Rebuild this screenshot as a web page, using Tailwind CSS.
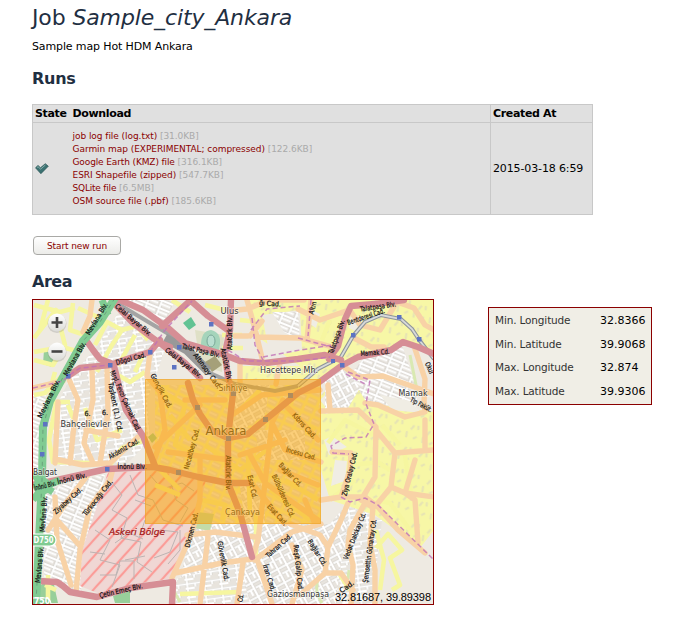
<!DOCTYPE html>
<html lang="en">
<head>
<meta charset="utf-8">
<title>Job Sample_city_Ankara</title>
<script src="https://cdn.jsdelivr.net/npm/@tailwindcss/browser@4"></script>
</head>
<body class="bg-white text-black font-['DejaVu_Sans',sans-serif] text-[11px] leading-[14px] pl-[32px] h-[633px] overflow-hidden">
<h1 class="pt-[4px] h-[40px] text-[22px] leading-[28px] tracking-[-0.13px] text-[#1f2f42] whitespace-nowrap"><span>Job</span> <i>Sample_city_Ankara</i></h1>
<p class="h-[28px] tracking-[-0.13px]">Sample map Hot HDM Ankara</p>
<h2 class="h-[36px] text-[16px] leading-[22px] tracking-[-0.25px] font-bold text-[#1f2f42]">Runs</h2>
<table class="w-[560px] border-collapse bg-[#e0e0e0] border border-[#c8c8c8] table-fixed">
  <colgroup><col class="w-[38px]"><col class="w-[420px]"><col class="w-[102px]"></colgroup>
  <tr class="h-[18px] text-left tracking-[-0.35px]">
    <th class="p-0 pl-[2px]">State</th><th class="p-0 pl-[2px]">Download</th><th class="p-0 pl-[2px] border-l border-[#c8c8c8]">Created At</th>
  </tr>
  <tr class="h-[92px] border-t border-[#c8c8c8]">
    <td class="p-0 pl-[2px]"><svg class="block" width="14" height="12" viewBox="0 0 14 12"><path d="M.5 4.800 3 2.400 5.500 4.700 10.300.700 13.300 3.200 5.900 10.700Z" fill="#3c7272" stroke="#2a5555" stroke-width=".7"/><path d="M2 4.600 3 3.700 5.600 6.100 10.400 2" fill="none" stroke="#86adab" stroke-width="1"/></svg></td>
    <td class="p-0 pl-[2px] text-[9px] leading-[13px] tracking-[-0.05px] text-[#8b0000]">
      <ul class="text-[#aaa]">
        <li><a class="text-[#8b0000]">job log file (log.txt)</a> [31.0KB]</li>
        <li><a class="text-[#8b0000]">Garmin map (EXPERIMENTAL; compressed)</a> [122.6KB]</li>
        <li><a class="text-[#8b0000] tracking-[-0.12px]">Google Earth (KMZ) file</a> [316.1KB]</li>
        <li><a class="text-[#8b0000]">ESRI Shapefile (zipped)</a> [547.7KB]</li>
        <li><a class="text-[#8b0000] tracking-[-0.2px]">SQLite file</a> [6.5MB]</li>
        <li><a class="text-[#8b0000]">OSM source file (.pbf)</a> [185.6KB]</li>
      </ul>
    </td>
    <td class="p-0 pl-[2px] border-l border-[#c8c8c8] tracking-[-0.13px]">2015-03-18 6:59</td>
  </tr>
</table>
<button class="block mt-[21px] ml-[1px] w-[88px] h-[19px] rounded-[4px] border border-[#a9a9a6] bg-linear-to-b from-white to-[#ecece9] text-[9px] leading-[18px] tracking-[-0.1px] text-[#8b0000]">Start new run</button>
<h2 class="mt-[16px] h-[28px] text-[16px] leading-[22px] tracking-[-0.5px] font-bold text-[#1f2f42]">Area</h2>
<div class="flex items-start">
<div class="w-[402px] h-[306px] border border-[#8b0000] shrink-0">
<svg class="block" width="400" height="304" viewBox="33 300 400 304">
<defs>
<pattern id="ga" width="17" height="9" patternUnits="userSpaceOnUse" patternTransform="rotate(-8)"><rect width="17" height="9" fill="#e8e4dd"/><path d="M0 1.5H17M2 0V9M10 1V5" stroke="#c9c6c0" stroke-width="2.6"/><path d="M0 1.5H17M2 0V9M0 6H9M10 1V5" stroke="#fff" stroke-width="1.8"/></pattern>
<pattern id="gb" width="13" height="8" patternUnits="userSpaceOnUse" patternTransform="rotate(22)"><rect width="13" height="8" fill="#e6e2dc"/><path d="M0 2H13M3 0V8" stroke="#c6c4c0" stroke-width="2.6"/><path d="M0 2H13M3 0V8M3 5.5H13" stroke="#fff" stroke-width="1.8"/></pattern>
<pattern id="gc" width="15" height="10" patternUnits="userSpaceOnUse" patternTransform="rotate(62)"><rect width="15" height="10" fill="#e8e4de"/><path d="M0 2H15M3 0V10M9 2V10" stroke="#c9c7c2" stroke-width="2.6"/><path d="M0 2H15M3 0V10M9 2V10M9 6H15" stroke="#fff" stroke-width="1.8"/></pattern>
<pattern id="ya" width="23" height="17" patternUnits="userSpaceOnUse" patternTransform="rotate(-70)"><rect width="23" height="17" fill="#f7f7a6"/><path d="M4 4l6-1M13 6l5 2M5 11l3 3M15 13l4-1" stroke="#e6e3b4" stroke-width="2"/></pattern>
<pattern id="yb" width="12" height="9" patternUnits="userSpaceOnUse" patternTransform="rotate(25)"><rect width="12" height="9" fill="#e8e4d8"/><path d="M0 2H12M3 0V9" stroke="#f8f8a8" stroke-width="3"/><path d="M4 6H12" stroke="#fff" stroke-width="1"/></pattern>
<pattern id="mil" width="11" height="11" patternUnits="userSpaceOnUse" patternTransform="rotate(42)"><rect width="11" height="11" fill="#f0d7d4"/><path d="M2 0V11" stroke="#fb9c98" stroke-width="2.2"/></pattern>
<linearGradient id="btn" x2="0" y2="1"><stop stop-color="#fff"/><stop offset="1" stop-color="#dcdcd8"/></linearGradient>
</defs>
<rect x="33" y="300" width="400" height="304" fill="#eeeae2"/>
<!-- land use blocks -->
<path d="M98 345 120 310 165 350 147 400 150 440 125 466H60L50 420 70 378Z" fill="url(#ga)"/>
<path d="M125 300H175L165 322Z" fill="url(#gb)"/>
<path d="M33 395H46L42 420V470H33ZM45 490 105 474 80 595 44 580Z" fill="url(#gb)"/>
<path d="M60 400h28l-8 62H56ZM100 372h12l10 60-22 25Z" fill="url(#ga)"/>
<path d="M155 385H321V524H155Z" fill="url(#yb)"/>
<path d="M230 385h40l-5 30-30 20ZM255 430h50v30h-45ZM240 486l25-3v40h-20Z" fill="url(#gc)"/>
<path d="M192 524H330L350 500 365 505V604H175Z" fill="url(#gc)"/>
<path d="M176 579 240 562 250 604H176Z" fill="url(#ga)"/>
<path d="M350 505 382 520 372 604H335Z" fill="url(#ga)"/>
<path d="M248 300H434V350L400 345 345 362 321 380H240V366H300L262 340Z" fill="url(#ya)"/>
<path d="M321 395 345 372 370 385 365 403 434 412V530L420 548 375 515 330 500 321 470Z" fill="url(#ya)"/>
<path d="M365 357 402 345 418 392 415 412 365 400 350 375Z" fill="url(#gb)"/>
<path d="M324 440l8-4 15 11-18 8ZM380 395l30 6 12 12-30-3ZM335 460l12 1-2 20-14 5ZM320 400l15-15 12 12-20 12ZM351 315l14 2-10 14-6-3ZM312 310l8 4-4 14-6-4Z" fill="#f0ede4"/>
<path d="M325 380l20-12 15 20-12 20-23 6Z" fill="url(#gc)"/>
<path d="M262 315 300 310 302 350 270 357Z" fill="#eeeae2"/>
<path d="M272 312 298 312 300 340 284 332Z" fill="url(#gb)"/>
<path d="M195 330 224 335 222 372 200 365Z" fill="#dfe0c6"/>
<path d="M183 323l8-6 5 8-7 5Z" fill="#62c394"/>
<path d="M201 345q0-14 10-15 10 2 9 14t-9 12-10-11Z" fill="#a5d4bb"/><ellipse cx="211" cy="341" rx="4" ry="6" fill="#b9ded0" stroke="#79a898" stroke-width="1"/>
<path d="M205 362l10-6 7 9-10 7Z" fill="#a5a079"/>
<path d="M108 472 155 471 206 480 200 505 190 533 174 578 135 584 100 594 80 586 82 550 95 512Z" fill="url(#mil)"/>
<g fill="none" stroke="#bdb4b3" stroke-width="1"><path d="M110 480l12 15-10 15 15 8-6 20 20 4-4 20 15 10M130 475l8 20 15 5 10 20 20 6M95 530l15 10-10 20 20 5-8 22M150 475l12 14 20-6 12 8M145 520l-6 18M160 530l18 2-8 20-16 6M125 560l20-4M90 552l15 2M170 480l6 20 12 8-8 14M115 543l14-10 14 6M100 575h16l4-14h14v18M135 500l16 6M180 530v20l-12 14"/></g>
<path d="M44 583l10 2 4 18H34v-14ZM113 596l17-6v13h-15ZM148 437l5-4 4 5-5 5ZM44 350l10 4-2 13-9-3Z" fill="#98cf9a"/>
<path d="M197 512l17 2-4 17-16-3Z" fill="#c3dba8"/>
<g fill="none" stroke="#d9e9b2" stroke-width="3"><path d="M318 580q-4 10 4 23M172 588l8 14M410 355l8 40M349 570l-2 15"/></g>
<!-- local yellow streets -->
<g fill="none" stroke="#f6f6a0" stroke-width="4.6" stroke-linejoin="round">
<path d="M34 305 60 312 75 308M34 338 56 310 65 345 53 365 34 360M73 303 70 330 85 335M48 300 40 330M34 352 62 347 80 352M63 375 45 393 34 395M55 372 50 390M78 308 100 318M95 345 107 322 122 330 137 326 148 340M97 372 112 345 122 330M118 366 135 335M56 404 49 440 53 462 92 463M48 402H70M68 405 76 425M85 408 97 440 122 430M110 465 122 448 145 440M116 374 130 382 145 372M135 372 143 355"/>
<path d="M172 300 190 312M205 305 225 310M242 335H222M243 348H222M240 320 258 322M328 443 345 420 374 435M330 500 355 480M352 465 380 462M404 450 412 500M382 425 400 445M374 460 390 470M375 500 390 503 410 530M376 548 388 534 402 550 390 558 400 585 392 590M376 530 384 560 380 590M322 340 330 320M45 585 56 590M340 575 350 590M180 594 240 592M256 513V560M160 470 180 490M48 575V603"/>
<path d="M160 390 185 405 175 445 200 458M155 485 180 495M205 445 240 470 280 440M248 455 250 515M285 410 315 430M270 490 310 520M285 480 318 500M170 415 190 440M202 500 225 505 222 520M240 410 260 390"/>
</g>
<!-- secondary roads -->
<g fill="none" stroke="#f8d2a6" stroke-width="5.4" stroke-linejoin="round" stroke-linecap="round"><path d="M92 300 90 316 83 332M33 388 63 381M68 377 78 400 74 425 70 463M92 370 93 400 84 443 93 463M107 368 108 413 100 463M150 353 147 376 160 392M58 402 55 463M55 459 83 465 110 463 138 437M90 472 63 507 48 530M113 468 110 480 90 507 80 550 76 592M55 497 57 540 71 585M57 520 80 546M86 430 118 436M247 300 255 329 262 358M228 311 247 309 270 300 304 300M250 336 262 321M240 362V385M235 336 248 336M280 362 276 384M298 309 320 320 349 310M258 337 300 338 332 347M311 300 307 340M343 366 358 377 383 376 434 394M354 338 371 347 384 347M397 302 414 308 425 325 434 330M349 309 360 325 380 330 395 305M415 349 425 379 424 404M200 500 192 533 172 578M187 535 215 532 256 537M208 537 200 604M175 573 222 563 252 559 258 540 265 483 272 423 283 400M255 560 272 547 292 532 321 524M258 562 272 604M243 563 237 604M272 423 285 450 321 462M321 411 358 410 376 427 375 477 361 500 372 507M365 403 378 405 405 417 425 412 424 400M376 430 395 453 434 450M425 420 425 450M395 453 391 487 378 503M415 460 405 493 415 500 418 543M391 487 405 493 434 497M332 452 351 453 350 470 341 497M321 500 341 497 365 497 378 507 398 530 425 553M365 503 350 530 348 545 353 565 351 604M373 507 370 543 375 570V604M290 524 320 535 328 547 325 573 300 595M328 547 341 520 348 503M325 573 341 573 353 590M292 545 302 570 292 604M185 400 225 400M160 392 165 430 152 466M155 447 200 405M168 452 230 460M200 460V500M240 455 285 440M232 415 262 395 320 390M250 455 265 483 318 520M283 403 300 420 318 440M280 470 318 485M251 482 285 524M305 500 315 524M328 385 330 410"/></g>
<!-- railways -->
<path d="M110 299 150 323 172 336 190 350 210 373 235 384 275 391 298 386" fill="none" stroke="#a4a4a4" stroke-width="4"/>
<path d="M165 338 187 350 208 371" fill="none" stroke="#999" stroke-width="9"/>
<path d="M298 386 318 369 341 357 353 336 365 322 381 315 401 319 412 329 420 341 434 359" fill="none" stroke="#8f959b" stroke-width="4"/>
<path d="M298 386 318 369 341 357 353 336 365 322 381 315 401 319 412 329 420 341 434 359" fill="none" stroke="#d8dada" stroke-width="1.8"/>
<!-- trunk roads -->
<g fill="none" stroke="#d68e95" stroke-linejoin="round" stroke-linecap="round">
<path stroke-width="6.4" d="M86 340 93 350 100 359 113 364 130 358 150 352 160 340M68 376 80 368 110 365M114 366 120 390 126 410 143 436 155 466M113 302 133 323 150 336 165 347 185 363 200 378M158 342 170 347M120 300 143 310 168 328 185 343 222 354 240 361 265 363 298 359 325 355 341 360M162 326 192 299M189 299 208 316 229 331M231 299 230 330 225 353 228 378 233 393 228 438 228 483 240 513 252 557M404 300 375 304 351 306 345 319 338 346 329 359M434 354 418 347 403 342 391 350 358 357 341 366 318 383 298 393 265 420 248 434 228 438 211 430 200 414 193 400 188 383M32 485 57 480 107 469 153 467 170 470 198 477 228 483 248 483M38 581 57 582 63 586 70 592 97 597 130 588 173 582 172 604"/>
</g>
<g fill="none" stroke="#80cb92" stroke-linejoin="round"><path stroke-width="8" d="M115 298 100 322 83 341 67 370 50 401 43 427 42 480 40 520 36 604"/><path stroke-width="7" d="M102 300 108 315M33 473 42 485 53 492M33 500 42 488 60 480"/></g>
<circle cx="42" cy="486" r="9" fill="#80cb92"/>
<path d="M115 298 100 322 83 341 67 370 50 401 43 427 42 480 40 520 36 604" fill="none" stroke="#6ba27c" stroke-width="1" stroke-dasharray="4 4"/>
<g fill="none" stroke="#c070b8" stroke-width="1.5" stroke-dasharray="5 3" opacity=".8"><path d="M33 388 63 381 68 376 80 368 110 365M150 352 165 330 192 301M252 318 255 345 263 360M251 330 267 309 300 306M263 357 300 350 333 345M298 338 335 348M348 372 370 380 366 404 374 424 366 437 345 438 331 446 333 453 349 454M311 300 308 336M341 497 350 502 365 498 378 505 434 560M346 374 367 385M228 350 246 361 300 361 330 357"/></g>
<g fill="#5d73c2"><path d="M66 374h4.500v4.500h-4.500zM108 363h4.500v4.500h-4.500zM148 350h4.500v4.500h-4.500zM43 422h4.500v4.500h-4.500zM40 452h4.500v4.500h-4.500zM105 467h4.500v4.500h-4.500zM209 322h4.500v4.500h-4.500zM177 345h4.500v4.500h-4.500zM172 365h4.500v4.500h-4.500zM351 333h4.500v4.500h-4.500zM397 315h4.500v4.500h-4.500zM417 337h4.500v4.500h-4.500zM331 359h4v4h-4zM340 363h4.500v4.500h-4.500zM195 405h5v5h-5zM263 417h5v5h-5zM226 436h5v5h-5zM176 470h5v5h-5zM231 391h5v5h-5zM288 393h5v5h-5z"/></g>
<g fill="#80cb92" stroke="#fff" stroke-width="1.200"><rect x="25" y="534" width="31" height="12" rx="6"/><rect x="25" y="598" width="26" height="12" rx="6"/></g>
<g id="labels" font-family="'DejaVu Sans', sans-serif" fill="#111"></g>
<rect x="145.500" y="379.500" width="175" height="144" fill="#f9a300" fill-opacity=".52" stroke="#efa322" stroke-opacity=".7"/>
<!-- zoom controls -->
<g><circle cx="57" cy="323.500" r="9.500" fill="#777" opacity=".25"/><circle cx="57" cy="322.500" r="9" fill="url(#btn)"/><path d="M51.500 322.500h11M57 317v11" stroke="#444" stroke-width="2.600"/>
<circle cx="57" cy="352.500" r="9.500" fill="#777" opacity=".25"/><circle cx="57" cy="351.500" r="9" fill="url(#btn)"/><path d="M51.500 351.500h11" stroke="#444" stroke-width="2.600"/></g>
<text x="335" y="601" font-family="'Liberation Sans', Arial, sans-serif" font-size="11" textLength="96" fill="#000">32.81687, 39.89398</text>
</svg>
</div>
<dl class="mt-[8px] ml-[54px] w-[164px] h-[98px] border border-[#8b0000] bg-[#f0eee6] grid grid-cols-[105px_1fr] auto-rows-[23.6px] pl-[6px] pt-[1px] leading-[23px]">
<dt class="text-[#333] text-[10.5px] tracking-[-0.15px]">Min. Longitude</dt><dd>32.8366</dd>
<dt class="text-[#333] text-[10.5px] tracking-[-0.15px]">Min. Latitude</dt><dd>39.9068</dd>
<dt class="text-[#333] text-[10.5px] tracking-[-0.15px]">Max. Longitude</dt><dd>32.874</dd>
<dt class="text-[#333] text-[10.5px] tracking-[-0.15px]">Max. Latitude</dt><dd>39.9306</dd>
</dl>
</div>
<script>
// text, centre x, centre y, angle, length, size, kind (p = place name, m = military, r = road shield)
const labels = [
["Ulus",229.500,311,0,18,9,"p"],["Hacettepe Mh.",289,370,0,58,9,"p"],["Sıhhiye",233,388,0,29,9,"p"],["Mamak",413,393,0,29,9,"p"],
["Bahçelievler",85.500,424,0,50,9,"p"],["Balgat",45,472,0,24,9,"p"],["Ankara",226,431,0,41,12,"p"],["Çankaya",242.500,512,0,35,9,"p"],
["Gaziosmanpaşa",298,594,0,62,9,"p"],["Askeri Bölge",137,531,0,56,9.500,"m"],["D750",43.500,540,0,20,9,"r"],["750",42,601,0,16,8,"r"],
["Mevlana Blv.",97,319,-59,36,7],["Mevlana Blv.",75,359,-60,38,7],["Mevlana Blv.",49,399,-64,42,7],["Mevlana Blv.",44,514,-86,36,7],["Mevlana Blv.",40,565,-84,36,7],
["Celal Bayar Blv.",133,320,40,45,7],["Celal Bayar Blv.",183,363,38,44,7],["Talat Paşa Blv.",201,351,14,39,7],["Atatürk Blv.",230,333,-90,34,7],["Atatürk Blv.",226,365,78,34,7],
["Altınsoy Cad.",207,371,54,42,7],["Dögol Cad.",131,359,-15,31,7],["Mrşl. Fevzi Çakmak Cad.",125,401,66,66,7],["Taşkent (1.) Cd.",115,407,79,50,7],["Gençlik Cad.",161,391,62,38,7],
["6.",87.500,414,0,6,7],["6.",105,413,0,6,7],["Akdeniz Cad.",124,449,-30,34,7],["İnönü Blv.",72,479,-14,30,7],["İnönü Blv.",132,467,0,29,7],["İnönü Blv.",45,486,-14,22,7],
["Ziyabey Cad.",68,501,-42,36,7],["Türkocağı Cad.",98,498,-52,44,7],["Çetin Emeç Blv.",121,591,-13,44,7],["Necatibey Cad.",192,449,-75,42,7],["Atatürk Blv.",228,473,90,35,7],
["Esat Cd.",252,487,78,24,7],["Bülbülderesi Cd.",283,496,66,46,7],["Esat Cad.",277,515,48,26,7],["Bağlar Cd.",290,475,46,30,7],["İncesu Cad.",301,454,16,31,7],["Kıbrıs Cad.",304,426,48,32,7],
["Dikmen Cad.",192,530,-76,36,7],["Güvenlik Cad.",223,561,80,40,7],["Tahran Cad.",279,546,-42,32,7],["İran Cad.",269,578,72,28,7],["Reşit Galip Cad.",298,568,84,46,7],["Bağlar Cd.",317,553,58,30,7],
["Vedat Dalokay Cd.",355,536,-68,50,7],["Şemsettin Günaltay Cd.",370,551,-82,64,7],["Ziya Oralay Cad.",350,474,-76,45,7],["Tıp Faküt.",421,405,28,24,7],["Mamak Cd.",375,353,-4,29,7],
["Bentderesi Cad.",366,317,-18,39,7],["Talatpaşa Blv.",378,307,-8,36,7],["Talatpaşa Blv.",337,337,-70,36,7],["Altın",313,308,-75,13,7],["ğı Cad.",270,304,4,22,7],["Okul",429,368,65,12,7],["Cd.",241,598,-80,8,7],["Cad.",347,587,-35,16,7]
];
const g = document.getElementById("labels");
for (const [s, x, y, a, len, size, kind] of labels) {
  const t = document.createElementNS("http://www.w3.org/2000/svg", "text");
  const at = {x, y, "text-anchor": "middle", "dominant-baseline": "central", "font-size": size, textLength: len, lengthAdjust: "spacingAndGlyphs", transform: `rotate(${a} ${x} ${y})`, stroke: "#111", "stroke-width": .22};
  if (kind === "p") Object.assign(at, {fill: "#333", stroke: "#fff", "stroke-width": 1.4, "stroke-opacity": .6, "paint-order": "stroke"});
  if (kind === "m") Object.assign(at, {fill: "#a31717", stroke: "#a31717", "font-style": "italic"});
  if (kind === "r") Object.assign(at, {fill: "#fff", stroke: "none", "font-weight": "bold"});
  for (const k in at) t.setAttribute(k, at[k]);
  t.textContent = s;
  g.appendChild(t);
}
</script>
</body>
</html>
